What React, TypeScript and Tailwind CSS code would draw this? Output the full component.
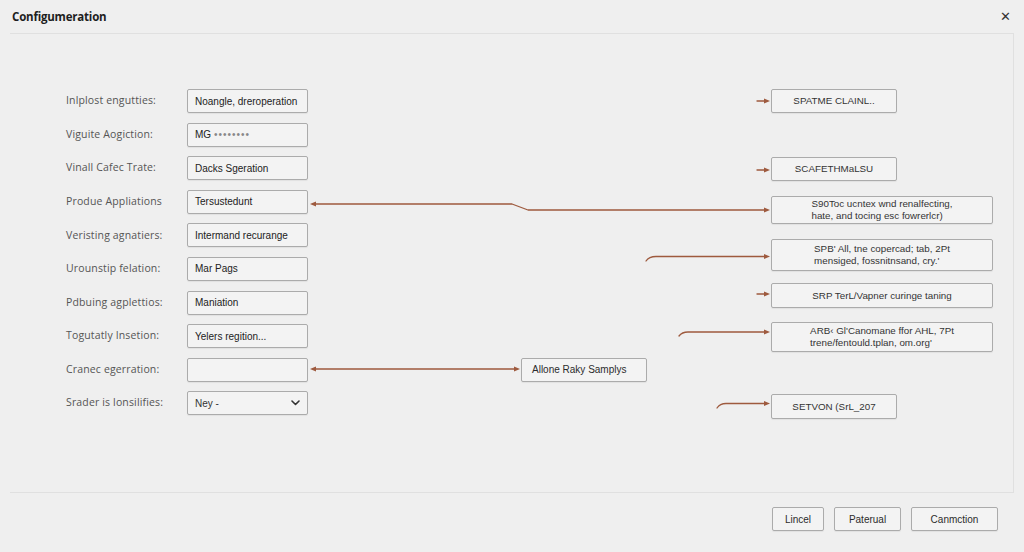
import React from "react";

interface Field {
  label: string;
  value: string;
  kind?: "text" | "secret" | "empty" | "select";
}

const fields: Field[] = [
  { label: "Inlplost engutties:", value: "Noangle, dreroperation" },
  { label: "Viguite Aogiction:", value: "MG", kind: "secret" },
  { label: "Vinall Cafec Trate:", value: "Dacks Sgeration" },
  { label: "Produe Appliations", value: "Tersustedunt" },
  { label: "Veristing agnatiers:", value: "Intermand recurange" },
  { label: "Urounstip felation:", value: "Mar Pags" },
  { label: "Pdbuing agplettios:", value: "Maniation" },
  { label: "Togutatly Insetion:", value: "Yelers regition..." },
  { label: "Cranec egerration:", value: "", kind: "empty" },
  { label: "Srader is lonsilifies:", value: "Ney -", kind: "select" },
];

// right hand result boxes
const results = [
  { lines: ["SPATME CLAINL.."], wide: false, mt: "mt-0", h: "h-[24px]" },
  { lines: ["SCAFETHMaLSU"], wide: false, mt: "mt-[44px]", h: "h-[24px]" },
  { lines: ["S90Toc ucntex wnd renalfecting,", "hate, and tocing esc fowrerlcr)"], wide: true, mt: "mt-[15px]", h: "h-[28px]" },
  { lines: ["SPB' All, tne copercad; tab, 2Pt", "mensiged, fossnitnsand, cry.'"], wide: true, mt: "mt-[15px]", h: "h-[32px]" },
  { lines: ["SRP TerL/Vapner curinge taning"], wide: true, mt: "mt-[12px]", h: "h-[25px]" },
  { lines: ["ARB‹ Gl'Canomane ffor AHL, 7Pt", "trene/fentould.tplan, om.org'"], wide: true, mt: "mt-[14px]", h: "h-[30px]" },
  { lines: ["SETVON (SrL_207"], wide: false, mt: "mt-[42px]", h: "h-[25px]" },
];

function Chevron() {
  return (
    <svg width="9" height="6" viewBox="0 0 9 6" fill="none">
      <path d="M1 1l3.5 3.5L8 1" stroke="#333" strokeWidth="1.6" strokeLinecap="round" strokeLinejoin="round" />
    </svg>
  );
}

function Connectors() {
  const c = "#9e5a3e";
  const headR = (x: number, y: number) => `${x - 6},${y - 2.5} ${x},${y} ${x - 6},${y + 2.5}`;
  const headL = (x: number, y: number) => `${x + 6},${y - 2.5} ${x},${y} ${x + 6},${y + 2.5}`;
  return (
    <svg className="pointer-events-none absolute left-0 top-0" width="1024" height="552" viewBox="0 0 1024 552" fill="none">
      <g stroke={c} strokeWidth="1.3" strokeLinecap="round" strokeLinejoin="round">
        <path d="M757 101H766" />
        <path d="M757 170H766" />
        <path d="M314 204H512L528 210H765" />
        <path d="M646 261Q649 256.5 656 256.5H765" />
        <path d="M757 294H766" />
        <path d="M679 336Q682 332 688 332H765" />
        <path d="M717 408Q720 403.5 726 403.5H765" />
        <path d="M314 369H516" />
      </g>
      <g fill={c}>
        <polygon points={headR(770, 101)} />
        <polygon points={headR(770, 170)} />
        <polygon points={headL(310, 204)} />
        <polygon points={headR(770, 210)} />
        <polygon points={headR(770, 256.5)} />
        <polygon points={headR(770, 294)} />
        <polygon points={headR(770, 332)} />
        <polygon points={headR(770, 403.5)} />
        <polygon points={headL(310, 369)} />
        <polygon points={headR(520, 369)} />
      </g>
    </svg>
  );
}

export default function App() {
  const boxCls = "rounded-[2px] border border-[#ababab] bg-[#f3f3f3] shadow-[0_1px_1px_rgba(0,0,0,0.06)]";
  const valFont = { fontFamily: '"Liberation Sans", Arial, sans-serif' };
  return (
    <div
      className="relative h-[552px] w-[1024px] overflow-hidden bg-[#efefef] text-[#2c2c2c]"
      style={{ fontFamily: '"Open Sans", "Noto Sans", "Liberation Sans", sans-serif' }}
    >
      {/* header */}
      <div className="flex h-[33px] items-center justify-between pl-[12px] pr-[13px]">
        <span className="text-[11.5px] font-bold tracking-[-0.2px] text-[#1e1e1e]">Configumeration</span>
        <span className="text-[13px] leading-none text-[#333]">✕</span>
      </div>

      {/* main panel */}
      <div className="ml-[10px] flex h-[460px] w-[1004px] border-t border-r border-b border-[#e0e0e0] pt-[55px] pl-[56px]">
        <div className="flex w-[581px] shrink-0 flex-col gap-[9.6px]">
          {fields.map((f, i) => (
            <div key={i} className="flex h-[24px] items-center">
              <span className="w-[121px] shrink-0 whitespace-nowrap text-[10.5px] tracking-[0.15px] text-[#555]">{f.label}</span>
              <div
                className={`flex h-[24px] w-[121px] shrink-0 items-center justify-between whitespace-nowrap px-[7px] text-[10px] text-[#222] ${boxCls}`}
                style={valFont}
              >
                {f.kind === "secret" ? (
                  <span>
                    {f.value} <span className="tracking-[1px] text-[#888]">••••••••</span>
                  </span>
                ) : (
                  <span className={f.kind === "select" ? "text-[#333]" : ""}>{f.value}</span>
                )}
                {f.kind === "select" && <Chevron />}
              </div>
              {i === 8 && (
                <div
                  className={`ml-[213px] flex h-[24px] w-[126px] shrink-0 items-center whitespace-nowrap pl-[10px] text-[10px] ${boxCls}`}
                  style={valFont}
                >
                  Allone Rаky Samplys
                </div>
              )}
            </div>
          ))}
        </div>

        <div className="ml-[124px] flex flex-col" style={valFont}>
          {results.map((r, i) => (
            <div
              key={i}
              className={`${r.mt} ${r.h} ${r.wide ? "w-[222px]" : "w-[126px]"} flex items-center justify-center whitespace-nowrap text-[9.8px] leading-[12px] text-[#333] ${boxCls}`}
            >
              <div className="text-left">
                {r.lines.map((l, j) => (
                  <div key={j}>{l}</div>
                ))}
              </div>
            </div>
          ))}
        </div>
      </div>

      {/* footer buttons */}
      <div className="flex justify-end gap-[10px] pt-[14px] pr-[26px]" style={valFont}>
        <button className={`h-[24px] w-[52px] text-[10px] ${boxCls}`}>Lincel</button>
        <button className={`h-[24px] w-[67px] text-[10px] ${boxCls}`}>Paterual</button>
        <button className={`h-[24px] w-[87px] text-[10px] ${boxCls}`}>Canmction</button>
      </div>

      <Connectors />
    </div>
  );
}
